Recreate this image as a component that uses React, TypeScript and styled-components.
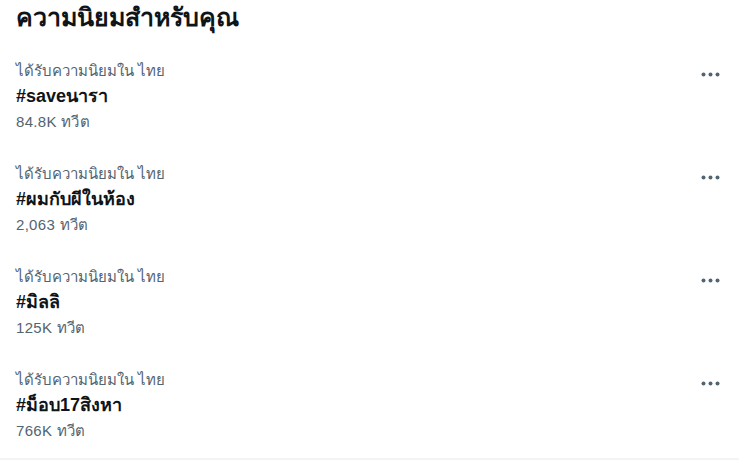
import { ReactElement } from 'react'
import styled, { createGlobalStyle } from 'styled-components'

const GlobalStyle = createGlobalStyle`
  body {
    margin: 0;
    background: #ffffff;
    font-family: "Liberation Sans", "Noto Sans", sans-serif;
    color: #0f1419;
  }
`

const Panel = styled.section`
  width: 739px;
  height: 460px;
  overflow: hidden;
  display: flex;
  flex-direction: column;
  border-bottom: 2px solid #f2f4f5;
  box-sizing: border-box;
`

const Header = styled.h2`
  flex-shrink: 0;
  margin: 0;
  padding: 0 16px;
  height: 52px;
  box-sizing: border-box;
  font-size: 25px;
  font-weight: 800;
  line-height: 34px;
`

const Trend = styled.div`
  flex-shrink: 0;
  display: flex;
  justify-content: space-between;
  align-items: flex-start;
  padding: 6px 16px 12px;
  height: 103px;
  box-sizing: border-box;
`

const TrendText = styled.div`
  display: flex;
  flex-direction: column;
`

const Meta = styled.span`
  font-size: 15px;
  line-height: 26px;
  color: #536471;
`

const Count = styled(Meta)`
  letter-spacing: 0.3px;
`

const Tag = styled.span`
  font-size: 18px;
  font-weight: 700;
  line-height: 25px;
  color: #0f1419;
`

const MoreButton = styled.button`
  border: none;
  background: none;
  padding: 0;
  margin: -1px -4px 0 0;
  width: 34px;
  height: 34px;
  display: flex;
  align-items: center;
  justify-content: center;
  color: #536471;
  cursor: pointer;
`

interface TrendData {
  tag: string
  count: string
}

const trends: TrendData[] = [
  { tag: '#saveนารา', count: '84.8K ทวีต' },
  { tag: '#ผมกับผีในห้อง', count: '2,063 ทวีต' },
  { tag: '#มิลลิ', count: '125K ทวีต' },
  { tag: '#ม็อบ17สิงหา', count: '766K ทวีต' }
]

const MoreIcon = (): ReactElement => (
  <svg width="19" height="5" viewBox="0 0 19 5" fill="currentColor">
    <circle cx="2.5" cy="2.5" r="2" />
    <circle cx="9.5" cy="2.5" r="2" />
    <circle cx="16.5" cy="2.5" r="2" />
  </svg>
)

export default function App(): ReactElement {
  return (
    <>
      <GlobalStyle />
      <Panel>
        <Header>ความนิยมสำหรับคุณ</Header>
        {trends.map((t) => (
          <Trend key={t.tag}>
            <TrendText>
              <Meta>ได้รับความนิยมใน ไทย</Meta>
              <Tag>{t.tag}</Tag>
              <Count>{t.count}</Count>
            </TrendText>
            <MoreButton aria-label="เพิ่มเติม">
              <MoreIcon />
            </MoreButton>
          </Trend>
        ))}
      </Panel>
    </>
  )
}
